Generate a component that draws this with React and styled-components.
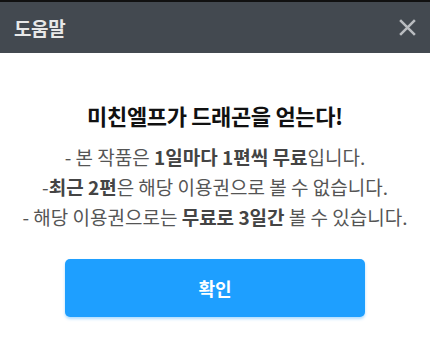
import React from "react"
import styled, { createGlobalStyle } from "styled-components"

const GlobalStyle = createGlobalStyle`
  html, body {
    margin: 0;
    padding: 0;
    background: #fff;
    font-family: "Noto Sans CJK KR", "Noto Sans", sans-serif;
  }
`

const Dialog = styled.div`
  width: 430px;
  height: 352px;
  display: flex;
  flex-direction: column;
  background: #fff;
  border-top: 2px solid #111;
  box-sizing: border-box;
`

const Header = styled.div`
  height: 51px;
  background: #434950;
  display: flex;
  align-items: center;
  justify-content: space-between;
  padding: 0 11px 0 14px;
`

const HeaderTitle = styled.h1`
  margin: 0;
  font-size: 19px;
  font-weight: 700;
  color: #e8e8e8;
  letter-spacing: -0.4px;
`

const CloseButton = styled.button`
  width: 24px;
  height: 24px;
  padding: 0;
  border: 0;
  background: none;
  display: flex;
  align-items: center;
  justify-content: center;
  cursor: pointer;
`

const Body = styled.div`
  display: flex;
  flex-direction: column;
  align-items: center;
  padding-top: 46px;
`

const Title = styled.h2`
  margin: 0 0 11px;
  font-size: 22px;
  font-weight: 700;
  color: #111;
  letter-spacing: -0.35px;
  line-height: 32px;
`

const Notice = styled.p`
  margin: 0;
  text-align: center;
  font-size: 19px;
  line-height: 30px;
  color: #555;
  letter-spacing: 0;
  white-space: nowrap;
`

const Strong = styled.b`
  font-weight: 700;
  color: #444;
`

const ConfirmButton = styled.button`
  margin-top: 27px;
  width: 300px;
  height: 58px;
  border: 0;
  border-radius: 5px;
  background: #1e9fff;
  color: #fff;
  font-family: inherit;
  font-size: 18px;
  font-weight: 700;
  box-shadow: 0 2px 3px rgba(30, 159, 255, 0.35);
  cursor: pointer;
`

export default function App() {
  return (
    <>
      <GlobalStyle />
      <Dialog>
        <Header>
          <HeaderTitle>도움말</HeaderTitle>
          <CloseButton aria-label="닫기">
            <svg width="19" height="19" viewBox="0 0 18 18">
              <path d="M2 2L16 16M16 2L2 16" stroke="#b9bcc0" strokeWidth="2.4" strokeLinecap="butt" />
            </svg>
          </CloseButton>
        </Header>
        <Body>
          <Title>미친엘프가 드래곤을 얻는다!</Title>
          <Notice>
            - 본 작품은 <Strong>1일마다 1편씩 무료</Strong>입니다.
            <br />
            -<Strong>최근 2편</Strong>은 해당 이용권으로 볼 수 없습니다.
            <br />- 해당 이용권으로는 <Strong>무료로 3일간</Strong> 볼 수 있습니다.
          </Notice>
          <ConfirmButton>확인</ConfirmButton>
        </Body>
      </Dialog>
    </>
  )
}
